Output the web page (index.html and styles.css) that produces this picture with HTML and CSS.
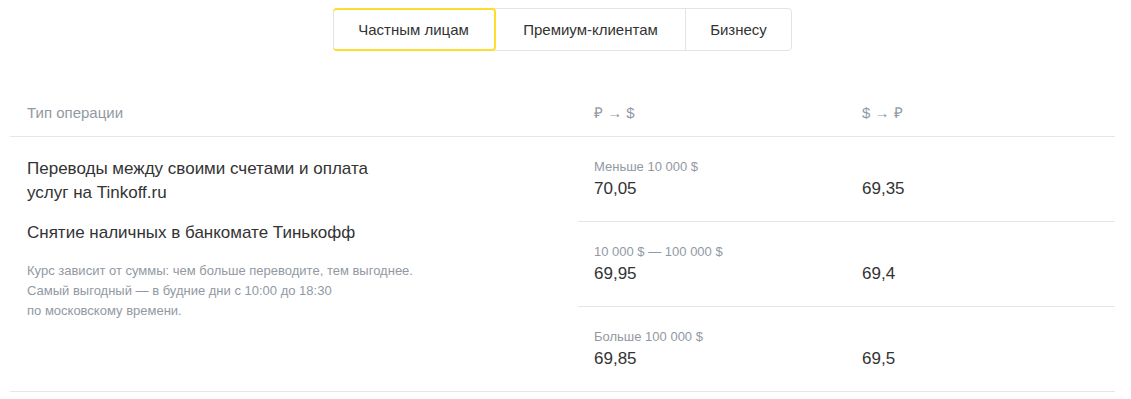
FILE: index.html
```html
<!DOCTYPE html>
<html lang="ru">
<head>
<meta charset="utf-8">
<link rel="stylesheet" href="styles.css">
</head>
<body>
<div class="page">
  <div class="tabs-wrap">
    <div class="tabs">
      <div class="tab tab-active">Частным лицам</div>
      <div class="tab">Премиум-клиентам</div>
      <div class="tab">Бизнесу</div>
    </div>
  </div>
  <div class="table">
    <div class="thead">
      <div class="th th-op">Тип операции</div>
      <div class="th th-col">₽ → $</div>
      <div class="th th-col">$ → ₽</div>
    </div>
    <div class="tbody">
      <div class="ops">
        <p class="op">Переводы между своими счетами и оплата<br>услуг на Tinkoff.ru</p>
        <p class="op">Снятие наличных в банкомате Тинькофф</p>
        <p class="note">Курс зависит от суммы: чем больше переводите, тем выгоднее.<br>Самый выгодный — в будние дни с 10:00 до 18:30<br>по московскому времени.</p>
      </div>
      <div class="rates">
        <div class="rate-row">
          <div class="rate-cell">
            <div class="rate-label">Меньше 10 000 $</div>
            <div class="rate-value">70,05</div>
          </div>
          <div class="rate-cell">
            <div class="rate-label"></div>
            <div class="rate-value">69,35</div>
          </div>
        </div>
        <div class="rate-row">
          <div class="rate-cell">
            <div class="rate-label">10 000 $ — 100 000 $</div>
            <div class="rate-value">69,95</div>
          </div>
          <div class="rate-cell">
            <div class="rate-label"></div>
            <div class="rate-value">69,4</div>
          </div>
        </div>
        <div class="rate-row rate-row-last">
          <div class="rate-cell">
            <div class="rate-label">Больше 100 000 $</div>
            <div class="rate-value">69,85</div>
          </div>
          <div class="rate-cell">
            <div class="rate-label"></div>
            <div class="rate-value">69,5</div>
          </div>
        </div>
      </div>
    </div>
  </div>
</div>
</body>
</html>
```
FILE: styles.css
```css
* { box-sizing: border-box; }
html, body { margin: 0; padding: 0; background: #fff; }
body {
  font-family: "Liberation Sans", Arial, sans-serif;
  color: #333;
}
.page {
  width: 1105px;
  margin-left: 10px;
  padding-top: 8px;
}
.tabs-wrap {
  display: flex;
  justify-content: center;
}
.tabs {
  display: flex;
  border: 1px solid #e3e3e3;
  border-radius: 4px;
  height: 43px;
}
.tab {
  display: flex;
  align-items: center;
  justify-content: center;
  font-size: 15px;
  color: #333;
  padding: 0 24px;
  border-left: 1px solid #e3e3e3;
}
.tab:first-child { border-left: none; }
.tab-active {
  width: 163px;
  margin: -1px 0 -1px -1px;
  border: 2px solid #ffdd2d;
  border-radius: 4px;
}
.tab:nth-child(2) { width: 189px; border-left: none; }
.tab:nth-child(3) { width: 106px; }
.table { margin-top: 37px; }
.thead {
  display: flex;
  height: 49px;
  border-bottom: 1px solid #e6e6e6;
  align-items: center;
}
.th {
  font-size: 15px;
  color: #9299a2;
}
.th-op { width: 568px; padding-left: 17px; }
.th-col { width: 268px; padding-left: 16px; }
.tbody {
  display: flex;
  border-bottom: 1px solid #e6e6e6;
}
.ops {
  width: 568px;
  padding: 20px 0 0 17px;
}
.op {
  margin: 0 0 16px;
  font-size: 17px;
  line-height: 24px;
  color: #333;
}
.note {
  margin: 0;
  font-size: 13px;
  line-height: 20px;
  color: #9299a2;
}
.rates { flex: 1; }
.rate-row {
  display: flex;
  height: 85px;
  padding-top: 20px;
  border-bottom: 1px solid #e6e6e6;
}
.rate-row-last { border-bottom: none; height: 84px; }
.rate-cell { width: 268px; padding-left: 16px; }
.rate-label {
  font-size: 13px;
  line-height: 20px;
  height: 20px;
  color: #9299a2;
}
.rate-value {
  font-size: 17px;
  line-height: 24px;
  color: #333;
}
```
